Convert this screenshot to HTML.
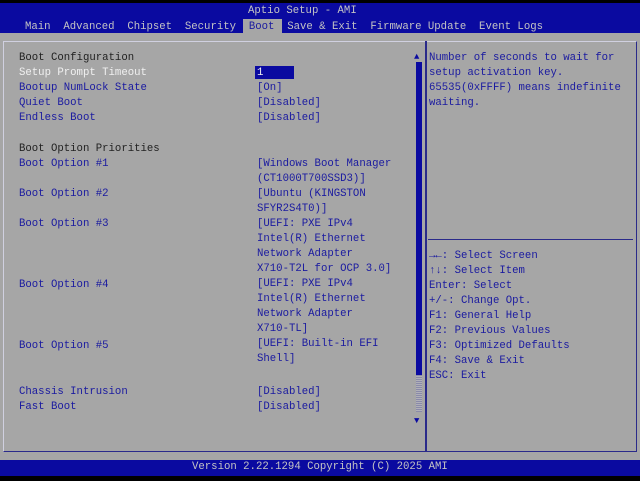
<!DOCTYPE html>
<html><head><meta charset="utf-8"><style>
*{margin:0;padding:0;box-sizing:border-box}
body{width:640px;height:480px;background:#000;position:relative;overflow:hidden;font-family:"Liberation Mono","DejaVu Sans Mono",monospace;font-size:10.67px;line-height:15px}
.a{position:absolute;white-space:pre}
.top{position:absolute;left:0;top:3px;width:640px;height:30px;background:#0a0aa0}
.body{position:absolute;left:0;top:33px;width:640px;height:427px;background:#a6a6a6}
.foot{position:absolute;left:0;top:460px;width:640px;height:16px;background:#0a0aa0}
.t{color:#c4c4c4}
.l{color:#1a1aa0}
.h{color:#222}
.w{color:#f0f0f0}
.s{position:absolute;left:0;top:1px;width:640px;height:480px}
</style></head><body>
<div class="top"></div>
<div class="body"></div>
<div class="foot"></div>
<div class="a t" style="left:248px;top:4px">Aptio Setup - AMI</div>
<div class="a" style="left:243px;top:19px;width:39px;height:14px;background:#a6a6a6"></div>
<div class="a t" style="left:25px;top:20px">Main  Advanced  Chipset  Security  <span style="color:#1a1aa0">Boot</span>  Save &amp; Exit  Firmware Update  Event Logs</div>
<div class="a" style="left:3px;top:41px;width:634px;height:411px;border:1px solid #2a2a8a;border-left-color:#d0d0e0;border-top-color:#d0d0e0"></div>
<div class="a" style="left:425px;top:41px;width:2px;height:411px;background:#2a2a8a"></div>
<div class="a" style="left:428px;top:239px;width:205px;height:1px;background:#2a2a8a"></div>
<div class="a" style="left:414px;top:50px;color:#0a0aa0;font-size:9px">▲</div>
<div class="a" style="left:416px;top:62px;width:6px;height:313px;background:#0a0aa0"></div>
<div class="a" style="left:416px;top:375px;width:6px;height:37px;background:repeating-linear-gradient(0deg,#8a8aa8 0 1px,#b0b0b8 1px 2px)"></div>
<div class="a" style="left:414px;top:414px;color:#0a0aa0;font-size:9px">▼</div>
<div class="s">
<div class="a h" style="left:19px;top:50px">Boot Configuration</div>
<div class="a" style="left:255px;top:65px;width:39px;height:13px;background:#0a0aa0"></div>
<div class="a w" style="left:19px;top:65px">Setup Prompt Timeout</div>
<div class="a w" style="left:257px;top:65px">1</div>
<div class="a l" style="left:19px;top:80px">Bootup NumLock State
Quiet Boot
Endless Boot</div>
<div class="a l" style="left:257px;top:80px">[On]
[Disabled]
[Disabled]</div>
<div class="a h" style="left:19px;top:141px">Boot Option Priorities</div>
<div class="a l" style="left:19px;top:156px">Boot Option #1</div>
<div class="a l" style="left:19px;top:186px">Boot Option #2</div>
<div class="a l" style="left:19px;top:216px">Boot Option #3</div>
<div class="a l" style="left:19px;top:277px">Boot Option #4</div>
<div class="a l" style="left:19px;top:338px">Boot Option #5</div>
<div class="a l" style="left:19px;top:384px">Chassis Intrusion</div>
<div class="a l" style="left:19px;top:399px">Fast Boot</div>
<div class="a l" style="left:257px;top:156px">[Windows Boot Manager
(CT1000T700SSD3)]
[Ubuntu (KINGSTON
SFYR2S4T0)]
[UEFI: PXE IPv4
Intel(R) Ethernet
Network Adapter
X710-T2L for OCP 3.0]
[UEFI: PXE IPv4
Intel(R) Ethernet
Network Adapter
X710-TL]
[UEFI: Built-in EFI
Shell]</div>
<div class="a l" style="left:257px;top:384px">[Disabled]</div>
<div class="a l" style="left:257px;top:399px">[Disabled]</div>
<div class="a l" style="left:429px;top:50px">Number of seconds to wait for
setup activation key.
65535(0xFFFF) means indefinite
waiting.</div>
<div class="a l" style="left:429px;top:248px">→←: Select Screen
↑↓: Select Item
Enter: Select
+/-: Change Opt.
F1: General Help
F2: Previous Values
F3: Optimized Defaults
F4: Save &amp; Exit
ESC: Exit</div>
</div>
<div class="a t" style="left:192px;top:460px">Version 2.22.1294 Copyright (C) 2025 AMI</div>
</body></html>
